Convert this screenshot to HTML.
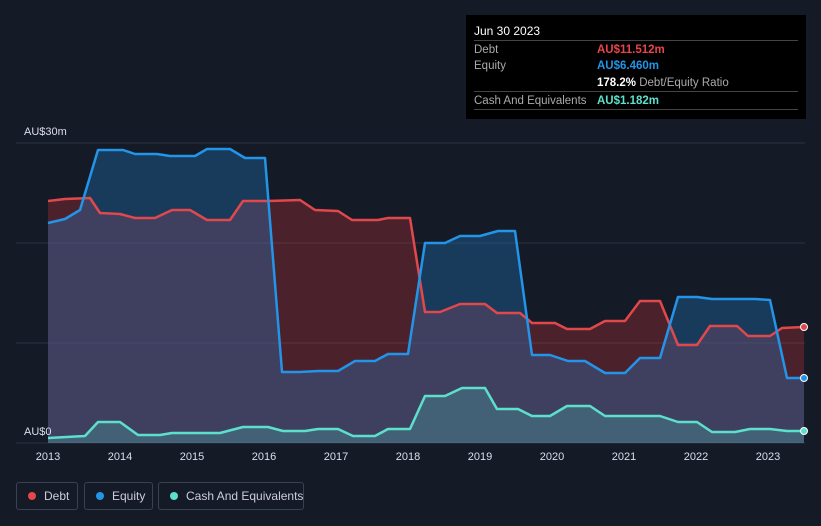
<!DOCTYPE html>
<html><head><meta charset="utf-8"><style>
html,body{margin:0;padding:0;background:#151b26;width:821px;height:526px;overflow:hidden;font-family:"Liberation Sans",sans-serif}
.tt{position:absolute;left:466px;top:15px;width:340px;height:104px;background:#000;color:#fff;font-size:11.5px}
.tt .h{position:absolute;left:8px;top:9px;font-size:12px}
.row{position:absolute;left:8px;width:324px;border-top:1px solid #444;height:17px}
.row span{position:absolute;top:3px;white-space:nowrap}
.lg{position:absolute;top:482px;height:28px;border:1px solid #3a4150;border-radius:3px;color:#ccd;font-size:12px;line-height:26px;box-sizing:border-box;white-space:nowrap}
.dot{display:inline-block;width:8px;height:8px;border-radius:50%;margin:0 8px 0 11px}
</style></head><body>
<svg width="821" height="526" style="position:absolute;left:0;top:0">
<g stroke="#2b3240" stroke-width="1"><line x1="16" y1="143" x2="805" y2="143"/><line x1="16" y1="243" x2="805" y2="243"/><line x1="16" y1="343" x2="805" y2="343"/><line x1="16" y1="443" x2="805" y2="443"/></g>
<path fill="rgba(215,55,60,0.28)" d="M48,201 65,199 90,198 100,213 120,214 135,218 155,218 172,210 190,210 207,220 230,220 243,201 268,201 300,200 315,210 338,211 352,220 378,220 388,218 410,218 425,312 440,312 460,304 485,304 497,313 520,313 532,323 555,323 567,329 590,329 605,321 625,321 640,301 660,301 678,345 697,345 710,326 737,326 748,336 770,336 782,328 804,327 804,443 48,443Z"/>
<path fill="rgba(33,140,230,0.28)" d="M48,223 65,219 80,210 98,150 123,150 135,154 157,154 170,156 195,156 207,149 230,149 245,158 265,158 282,372 300,372 318,371 338,371 355,361 375,361 388,354 408,354 425,243 445,243 460,236 480,236 498,231 515,231 532,355 550,355 568,361 585,361 605,373 625,373 640,358 660,358 678,297 697,297 712,299 755,299 770,300 787,378 804,378 804,443 48,443Z"/>
<path fill="rgba(80,220,200,0.22)" d="M48,438 85,436 98,422 120,422 138,435 160,435 172,433 220,433 243,427 268,427 283,431 305,431 318,429 338,429 353,436 375,436 388,429 410,429 425,396 445,396 462,388 485,388 497,409 518,409 532,416 550,416 567,406 590,406 605,416 660,416 678,422 697,422 712,432 735,432 750,429 770,429 787,431 804,431 804,443 48,443Z"/>
<g fill="none" stroke-width="2.5" stroke-linejoin="round">
<path stroke="#e0484c" d="M48,201 65,199 90,198 100,213 120,214 135,218 155,218 172,210 190,210 207,220 230,220 243,201 268,201 300,200 315,210 338,211 352,220 378,220 388,218 410,218 425,312 440,312 460,304 485,304 497,313 520,313 532,323 555,323 567,329 590,329 605,321 625,321 640,301 660,301 678,345 697,345 710,326 737,326 748,336 770,336 782,328 804,327"/>
<path stroke="#2394e8" d="M48,223 65,219 80,210 98,150 123,150 135,154 157,154 170,156 195,156 207,149 230,149 245,158 265,158 282,372 300,372 318,371 338,371 355,361 375,361 388,354 408,354 425,243 445,243 460,236 480,236 498,231 515,231 532,355 550,355 568,361 585,361 605,373 625,373 640,358 660,358 678,297 697,297 712,299 755,299 770,300 787,378 804,378"/>
<path stroke="#5ce0cc" d="M48,438 85,436 98,422 120,422 138,435 160,435 172,433 220,433 243,427 268,427 283,431 305,431 318,429 338,429 353,436 375,436 388,429 410,429 425,396 445,396 462,388 485,388 497,409 518,409 532,416 550,416 567,406 590,406 605,416 660,416 678,422 697,422 712,432 735,432 750,429 770,429 787,431 804,431"/>
</g>
<circle cx="804" cy="327" r="3.5" fill="#e0484c" stroke="#fff" stroke-width="1"/>
<circle cx="804" cy="378" r="3.5" fill="#2394e8" stroke="#fff" stroke-width="1"/>
<circle cx="804" cy="431" r="3.5" fill="#5ce0cc" stroke="#fff" stroke-width="1"/>
<g fill="#dde" font-size="11" font-family="Liberation Sans,sans-serif">
<text x="24" y="135">AU$30m</text><text x="24" y="435">AU$0</text>
<g text-anchor="middle"><text x="48" y="460">2013</text><text x="120" y="460">2014</text><text x="192" y="460">2015</text><text x="264" y="460">2016</text><text x="336" y="460">2017</text><text x="408" y="460">2018</text><text x="480" y="460">2019</text><text x="552" y="460">2020</text><text x="624" y="460">2021</text><text x="696" y="460">2022</text><text x="768" y="460">2023</text></g>
</g>
</svg>
<div class="tt"><div class="h">Jun 30 2023</div>
<div class="row" style="top:25px"><span style="color:#aaa">Debt</span><span style="left:123px;color:#e8454a;font-weight:bold">AU$11.512m</span></div>
<div class="row" style="top:42px;border:0"><span style="color:#aaa">Equity</span><span style="left:123px;color:#2394e8;font-weight:bold">AU$6.460m</span></div>
<div class="row" style="top:59px;border:0"><span style="left:123px"><b>178.2%</b> <span style="position:static;color:#aaa">Debt/Equity Ratio</span></span></div>
<div class="row" style="top:76px"><span style="color:#aaa">Cash And Equivalents</span><span style="left:123px;color:#5ce0cc;font-weight:bold">AU$1.182m</span></div>
<div class="row" style="top:94px;height:0"></div>
</div>
<div class="lg" style="left:16px;width:62px"><span class="dot" style="background:#e0484c"></span>Debt</div>
<div class="lg" style="left:84px;width:69px"><span class="dot" style="background:#2394e8"></span>Equity</div>
<div class="lg" style="left:158px;width:146px"><span class="dot" style="background:#5ce0cc"></span>Cash And Equivalents</div>
</body></html>
